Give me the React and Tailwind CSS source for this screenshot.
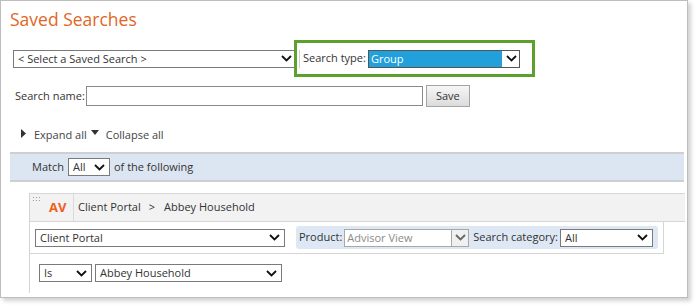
import React from "react";

const F = { fontFamily: '"Open Sans", "Noto Sans", sans-serif' };

function Chevron({ className = "" }) {
  return (
    <svg width="11" height="7" viewBox="0 0 11 7" className={className}>
      <path d="M1 1 L5.5 5.5 L10 1" fill="none" stroke="currentColor" strokeWidth="1.8" />
    </svg>
  );
}

function Select({ text, className = "", textClass = "" }) {
  return (
    <div className={`flex items-center justify-between border border-[#7a7a7a] bg-white h-[18px] pl-[4px] pr-[4px] box-border ${className}`}>
      <span className={`text-[11px] leading-[16px] text-[#333] whitespace-nowrap ${textClass}`}>{text}</span>
      <Chevron className="text-[#111] shrink-0" />
    </div>
  );
}

export default function App() {
  return (
    <div className="w-[697px] h-[307px] bg-white overflow-hidden" style={F}>
      <div className="w-[688px] h-[298px] border border-[#bdbdbd] box-border shadow-[3px_3px_4px_rgba(0,0,0,0.18)] pl-[9px] text-[#333]">
        {/* Title */}
        <div className="mt-[6px] h-[24px] text-[17.5px] leading-[24px] text-[#e2661f]">Saved Searches</div>

        {/* Row 1 */}
        <div className="mt-[9px] flex items-center h-[37px]">
          <Select text="< Select a Saved Search >" className="ml-[3px] w-[284px]" />
          <div className="ml-[-3px] w-[241px] h-[37px] border-[3px] border-[#5da02e] box-border flex items-center relative bg-white">
            <div className="w-px h-[18px] bg-[#cfcfcf] ml-[2px]" />
            <span className="ml-[3px] text-[11px] text-[#333] whitespace-nowrap">Search type:</span>
            <div className="ml-[2px] w-[152px] h-[18px] border border-[#555] box-border flex items-center bg-white">
              <div className="w-[133px] h-full bg-[#22a0db] text-white text-[11px] leading-[16px] pl-[2px]">Group</div>
              <Chevron className="text-[#111] ml-[4px]" />
            </div>
          </div>
        </div>

        {/* Row 2 */}
        <div className="mt-[8px] flex items-center h-[22px]">
          <span className="ml-[5px] text-[11px] text-[#333] whitespace-nowrap">Search name:</span>
          <div className="ml-[1px] w-[337px] h-[20px] border border-[#8a8a8a] bg-white box-border" />
          <div className="ml-[3px] w-[44px] h-[22px] border border-[#a4a4a4] box-border bg-gradient-to-b from-[#f6f6f6] to-[#dcdcdc] flex items-center justify-center text-[11px] text-[#333]">Save</div>
        </div>

        {/* Row 3 */}
        <div className="mt-[19px] flex items-center h-[18px] text-[11px] text-[#444]">
          <svg width="5" height="9" viewBox="0 0 5 9" className="ml-[11px] mb-[3px]">
            <path d="M0 0 L5 4.5 L0 9 Z" fill="#333" />
          </svg>
          <span className="ml-[8px]">Expand all</span>
          <svg width="8" height="5" viewBox="0 0 8 5" className="ml-[4px] mb-[5px]">
            <path d="M0 0 L8 0 L4 5 Z" fill="#333" />
          </svg>
          <span className="ml-[7px]">Collapse all</span>
        </div>

        {/* Match bar */}
        <div className="mt-[8px] w-[674px] h-[30px] border-y-2 border-[#cfcfcf] bg-[#dce6f2] box-border flex items-center text-[11px] text-[#333]">
          <span className="ml-[22px]">Match</span>
          <Select text="All" className="ml-[4px] w-[42px]" />
          <span className="ml-[4px]">of the following</span>
        </div>

        {/* Card */}
        <div className="mt-[11px] ml-[19px] w-[656px] h-[100px] border-l border-[#d3d3d3] box-border">
          <div className="h-[29px] border-y border-[#d6d6d6] bg-[#f2f2f2] flex items-stretch box-border">
            <div className="w-[44px] border-r border-[#dadada] flex items-center relative">
              <div className="absolute left-[3px] top-[3px] grid grid-cols-3 gap-[2px]">
                {Array.from({ length: 6 }).map((_, i) => (
                  <div key={i} className="w-[1px] h-[1px] bg-[#9a9a9a]" />
                ))}
              </div>
              <span className="ml-[19px] text-[13px] font-bold text-[#ee5f1e]">AV</span>
            </div>
            <div className="flex items-center ml-[4px] text-[11px] text-[#333]">
              <span>Client Portal</span>
              <span className="ml-[8px]">&gt;</span>
              <span className="ml-[9px]">Abbey Household</span>
            </div>
          </div>
          <div className="w-[634px] h-[32px] border-r border-b border-[#d6d6d6] box-border flex items-center">
            <Select text="Client Portal" className="ml-[5px] w-[250px]" />
            <div className="ml-[11px] w-[362px] h-[23px] bg-[#dde8f4] rounded-[3px] flex items-center text-[11px] text-[#333]">
              <span className="ml-[3px]">Product:</span>
              <div className="ml-[2px] w-[125px] h-[18px] border border-[#a8a8a8] bg-white box-border flex items-center justify-between">
                <span className="pl-[2px] text-[11px] leading-[16px] text-[#8a8a8a]">Advisor View</span>
                <div className="w-[17px] h-full border-l border-[#a8a8a8] bg-[#f0f0f0] flex items-center justify-center">
                  <Chevron className="text-[#666]" />
                </div>
              </div>
              <span className="ml-[4px] whitespace-nowrap">Search category:</span>
              <Select text="All" className="ml-[2px] w-[93px]" />
            </div>
          </div>
          <div className="flex items-center mt-[10px] h-[18px]">
            <Select text="Is" className="ml-[9px] w-[53px]" />
            <Select text="Abbey Household" className="ml-[3px] w-[187px]" />
          </div>
        </div>
      </div>
    </div>
  );
}
